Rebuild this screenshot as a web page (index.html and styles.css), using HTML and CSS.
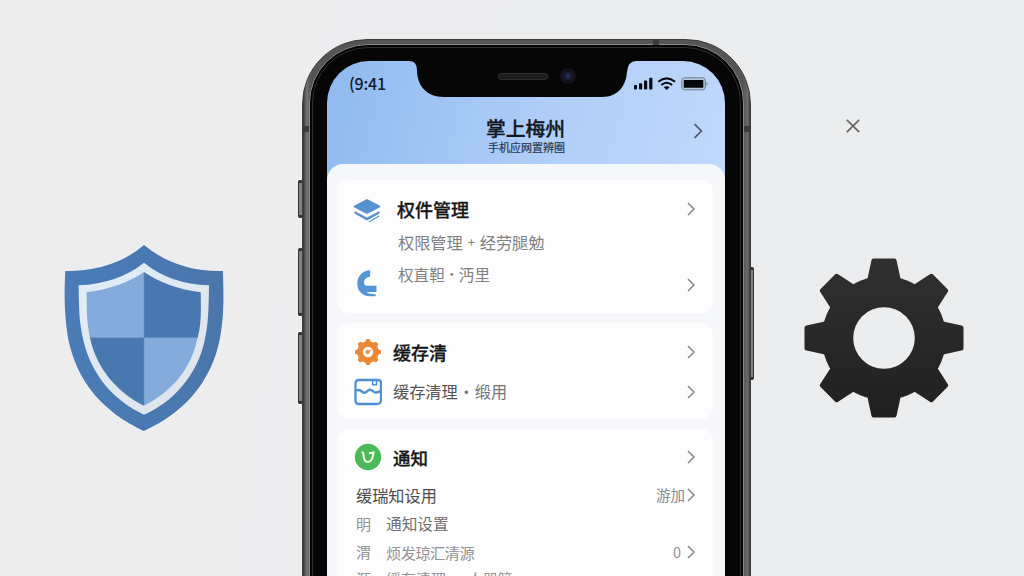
FILE: index.html
```html
<!DOCTYPE html>
<html lang="zh-CN">
<head>
<meta charset="utf-8">
<title>掌上梅州</title>
<link rel="stylesheet" href="styles.css">
</head>
<body>
<svg class="defs" width="0" height="0"><defs>
  <symbol id="chevron" viewBox="0 0 8 14"><path d="M1 1 L7 7 L1 13" fill="none" stroke="currentColor" stroke-width="1.5"/></symbol>
  <path id="tooth" d="M-17 -57 L-12.6 -77.5 Q-12.3 -79.5 -10.5 -79.5 H10.5 Q12.3 -79.5 12.6 -77.5 L17 -57 Z"/>
</defs></svg>
<main class="scene">
  <section class="side side-left">
    <svg class="shield" viewBox="42 26 480 564">
      <defs>
        <linearGradient id="rim" x1="0" x2="1" y1="0" y2="1"><stop offset="0" stop-color="#e2edf9"/><stop offset="1" stop-color="#dde3ea"/></linearGradient>
        <linearGradient id="base" x1="0" x2="1"><stop offset="0" stop-color="#4a7cb8"/><stop offset="1" stop-color="#4a76ab"/></linearGradient>
        <clipPath id="inner"><path d="M282 110 Q352 158 452 171 C454 245 452 280 440 318 C420 410 355 475 282 511 C205 475 140 400 121 312 C110 265 110 225 109 171 Q212 158 282 110 Z"/></clipPath>
      </defs>
      <path fill="url(#base)" d="M282 29 Q380 110 519 107 C521 200 522 240 510 308 C485 440 400 535 281 587 C160 530 80 440 54 308 C43 240 42 180 46 107 Q190 108 282 29 Z"/>
      <path fill="url(#rim)" d="M282 82 Q360 146 477 150 C476 230 475 270 463 320 C440 420 370 500 282 538 C190 495 125 420 100 315 C87 260 87 220 86 150 Q205 144 282 82 Z"/>
      <g clip-path="url(#inner)">
        <path fill="#84abdb" d="M100 100H282V307H100Z M282 307H460V520H282Z"/>
        <path fill="#4977b0" d="M282 100H460V307H282Z M100 307H282V520H100Z"/>
        <path d="M282 110V511M109 307H452" stroke="#648fc6" stroke-width="2"/>
      </g>
    </svg>
  </section>

  <section class="phone">
    <i class="key key-mute"></i><i class="key key-up"></i><i class="key key-down"></i><i class="key key-power"></i>
    <i class="seam seam-top"></i><i class="seam seam-left"></i><i class="seam seam-right"></i>
    <div class="rail"><div class="groove"><div class="bezel"><div class="screen">
      <svg class="notch" viewBox="0 0 398 40">
        <path d="M82 -1 V0 Q90 0 90 9 C90 24 99 36 117 36 H275 C291 36 299 25 300 11 Q301 0 309 0 V-1 Z" fill="#060607"/>
        <rect x="171" y="12.5" width="50" height="6" rx="3" fill="#1c1c1e" stroke="#363639" stroke-width=".8"/>
        <circle cx="241" cy="15" r="8" fill="#12131a"/><circle cx="241" cy="15" r="4" fill="#191e36"/><circle cx="241" cy="15" r="1.3" fill="#303c6c"/>
      </svg>
      <header class="top">
        <div class="status">
          <span class="time">(9:41</span>
          <svg class="signals" viewBox="0 0 76 14">
            <g fill="#080b12"><rect x="1" y="8" width="3" height="4.5" rx=".8"/><rect x="6" y="6.3" width="3.2" height="6.2" rx=".8"/><rect x="11" y="3.6" width="3.2" height="8.9" rx=".8"/><rect x="16.2" y=".7" width="3.2" height="11.8" rx=".8"/><path d="M30.8 10.3 Q33.7 8.3 36.6 10.3 L33.7 13 Z"/></g>
            <path d="M25.3 4.8 Q33.7 -2 42.1 4.8 M28.3 8 Q33.7 3.5 39.1 8" fill="none" stroke="#080b12" stroke-width="2"/>
            <rect x="48.8" y=".8" width="23.5" height="12" rx="2.7" fill="#b5c7df" stroke="#707b8c"/><rect x="50.8" y="3" width="19.5" height="7.8" rx=".6" fill="#05070a"/><path d="M73.6 5 Q75.4 6.8 73.6 8.6Z" fill="#404853"/>
          </svg>
        </div>
        <div class="heading">
          <div class="titles"><h1>掌上梅州</h1><p>手机应网置辨圈</p></div>
          <svg class="chev chev-large"><use href="#chevron"/></svg>
        </div>
      </header>
      <div class="sheet">
        <article class="card card-rights">
          <svg class="icon stack" viewBox="0 0 28 26">
            <path fill="#5792cf" d="M14 1 L27 7.7 Q28 8.5 27 9.3 L15 15.5 Q14 16 13 15.5 L1 9.3 Q0 8.5 1 7.7Z"/>
            <path fill="#5792cf" d="M1.5 13 L13 19.1 Q14 19.5 15 19.1 L26.5 13.1 V15.5 L15 22 Q14 22.5 13 22 L1.5 15.5Z"/>
            <path d="M16 24 L26 18" stroke="#5792cf" stroke-width="1.2"/>
          </svg>
          <div class="copy"><h2>权件管理</h2><p class="line-one"><span>权限管理</span><b>+</b><span>经劳腿勉</span></p><p class="line-two"><span>权直靼</span><b>·</b><span>沔里</span></p></div>
          <svg class="chev"><use href="#chevron"/></svg>
          <svg class="icon magnet" viewBox="0 0 20 27">
            <path d="M13.2 .3 V6.8 C9 7.2 7 10 7 12.4 Q7 15 9.5 15.8 H19.5 V21.9 H9.5 Q12 24 18.6 24.2 V26.3 H13 C5 26.3 .3 20.5 .3 13.5 C.3 6 6 .3 13.2 .3Z" fill="#5796d4"/>
          </svg>
          <svg class="chev chev-second"><use href="#chevron"/></svg>
        </article>

        <article class="card card-cache">
          <div class="row row-clean">
            <svg class="icon" viewBox="-14 -14 28 28">
              <g fill="#ea8836"><circle r="10.8"/><g id="cog-pair"><rect x="-2.3" y="-13" width="4.6" height="26" rx="1.5"/><rect x="-13" y="-2.3" width="26" height="4.6" rx="1.5"/></g><use href="#cog-pair" transform="rotate(45)"/></g>
              <circle r="5.2" fill="#fffaf5"/><circle r="2" cx="-.3" fill="#e88b42"/><path d="M0 0 L3-2" stroke="#e88b42"/>
            </svg>
            <h2>缓存清</h2><svg class="chev"><use href="#chevron"/></svg>
          </div>
          <div class="row row-usage">
            <svg class="icon" viewBox="0 0 28 28"><g fill="none" stroke="#4e91d2" stroke-width="2.3"><path d="M5 2 H24 Q27 2 27 5 V22 Q27 26 23 26 H5 Q1.5 26 1.5 23 V5.5 Q1.5 2 5 2Z"/><path d="M2 12.5 Q6 11 8.5 14 Q11 16 14 12.5 Q17 10.5 20 14 Q23 15.5 27 12.5"/><path d="M18.7 2 V6.7 H22.5 V3" stroke-width="1.5"/></g></svg>
            <p><span class="ink">缓存清理</span><b>·</b><span>缎用</span></p><svg class="chev"><use href="#chevron"/></svg>
          </div>
        </article>

        <article class="card card-notice">
          <div class="row row-notice">
            <svg class="icon" viewBox="0 0 28 28"><circle cx="14" cy="14" r="13.2" fill="#4cba59"/><path d="M7.5 9.3 Q9.6 9 9.5 12 Q9.8 19 14 19 Q18.7 18.5 19.5 9.5 M15 10.3 L20.5 9.3" fill="none" stroke="#f2fff2" stroke-width="2"/></svg>
            <h2>通知</h2><svg class="chev"><use href="#chevron"/></svg>
          </div>
          <div class="item item-dark"><span class="wide">缓瑞知设用</span><em>游加</em><svg class="chev"><use href="#chevron"/></svg></div>
          <div class="item item-mid"><i>明</i><span>通知设置</span></div>
          <div class="item"><i>渭</i><span class="tight">烦发琼汇清源</span><em class="count">0</em><svg class="chev"><use href="#chevron"/></svg></div>
          <div class="item"><i>源</i><span class="last">缓存清理 · 人器管</span></div>
        </article>
      </div>
    </div></div></div></div>
  </section>

  <section class="side side-right">
    <svg class="close" viewBox="0 0 14 14"><path d="M.8 .8 L13.2 13.2 M13.2 .8 L.8 13.2" stroke="#686868" stroke-width="1.7"/></svg>
    <svg class="gear" viewBox="-80 -80 160 160">
      <defs><linearGradient id="coal" x1="0" x2="0" y1="0" y2="1"><stop offset="0" stop-color="#303030"/><stop offset="1" stop-color="#202020"/></linearGradient>
      <mask id="gear-shape"><g fill="#fff"><circle r="62"/><use href="#tooth"/><use href="#tooth" transform="rotate(45)"/><use href="#tooth" transform="rotate(90)"/><use href="#tooth" transform="rotate(135)"/><use href="#tooth" transform="rotate(180)"/><use href="#tooth" transform="rotate(225)"/><use href="#tooth" transform="rotate(270)"/><use href="#tooth" transform="rotate(315)"/></g><circle r="30.8" fill="#000"/></mask></defs>
      <rect x="-80" y="-80" width="160" height="160" fill="url(#coal)" mask="url(#gear-shape)"/>
    </svg>
  </section>
</main>
</body>
</html>
```
FILE: styles.css
```css
* { box-sizing: border-box; }
body { margin: 0; overflow: hidden; font-family: "Noto Sans CJK SC", sans-serif; }
h1, h2, p { margin: 0; }
svg { display: block; flex: none; }
i, em { font-style: normal; }
.defs { position: absolute; }
.scene { width: 1024px; height: 576px; overflow: hidden; display: grid; grid-template-columns: 302px 449px 273px; background: linear-gradient(100deg, #ededee, #ecedef 60%, #ebecee); }
.side-left { padding: 244px 0 0 64px; }
.shield { width: 160px; height: 188px; }
.side-right { display: flex; flex-direction: column; padding: 119px 0 0 53px; }
.close { width: 14px; height: 14px; margin-left: 42px; }
.gear { width: 160px; height: 160px; margin-top: 125px; margin-left: -.5px; }

.phone { position: relative; height: 660px; margin-top: 39px; }
.rail { position: relative; height: 100%; padding: 4px 6px; border-radius: 65px; background: linear-gradient(90deg, #343434, #777 4px, #555 7px, #555 440px, #6c6c6c 445px, #343434); border: 1px solid #3c3c3c; }
.groove { height: 100%; padding: 2px; border-radius: 59px; background: #050505; border: 1px solid #8a8a8a; }
.bezel { height: 100%; padding: 13px 15px; border-radius: 56px; background: #060607; border: 1px solid #2f2f30; }
.screen { position: relative; height: 600px; width: 398px; margin-left: -1px; border-radius: 42px 42px 0 0; overflow: hidden; background: linear-gradient(105deg, #8fbaf0 0, #b1cff8 58%, #c0d8fa 100%) 0 0 / 100% 130px no-repeat, #f5f7fb; }
.notch { position: absolute; left: 0; top: 0; width: 398px; height: 40px; }
.key { position: absolute; width: 5px; background: #828282; border: 1px solid #333; border-top-width: 3px; border-bottom-width: 3px; border-radius: 2px; }
.key-mute { left: -4px; top: 141px; height: 38px; }
.key-up { left: -4px; top: 209px; height: 68px; }
.key-down { left: -4px; top: 293px; height: 72px; }
.key-power { right: -3px; top: 228px; height: 113px; }
.seam { position: absolute; z-index: 1; background: #3b3b3b; }
.seam-top { left: 351px; top: 0; width: 6px; height: 6px; }
.seam-left { left: 0; top: 87px; width: 7px; height: 6px; }
.seam-right { right: 0; top: 87px; width: 7px; height: 6px; }

.top { position: relative; height: 103px; }
.status { display: flex; justify-content: space-between; height: 47px; padding: 13px 16px 0 22px; }
.time { font: 500 16px/20px "Noto Sans CJK SC", sans-serif; letter-spacing: -.2px; color: #111a2a; margin-top: -1px; }
.signals { width: 76px; height: 14px; margin-top: 3px; }
.heading { display: grid; grid-template-columns: 1fr auto; padding: 7px 22px 0 159px; }
.titles h1 { font-size: 19.8px; line-height: 28px; font-weight: 500; color: #111722; white-space: nowrap; margin-top: -1px; -webkit-text-stroke: .3px currentColor; }
.titles p { font-size: 11px; line-height: 12px; margin: -1px 0 0 2px; color: #29384f; -webkit-text-stroke: .2px currentColor; }
.chev { width: 8px; height: 14px; margin-left: auto; color: #858585; }
.chev-large { width: 10px; height: 16px; margin-top: 8px; color: #505b6c; }
.sheet { display: flex; flex-direction: column; gap: 10px; height: 600px; padding: 16px 12px 0 10px; border-radius: 16px 16px 0 0; background: #f5f7fa; }
.card { flex: none; border-radius: 12px; background: #fdfdfe; padding: 0 18px 0 16px; }
.icon { width: 28px; height: 28px; }
h2 { font-size: 18px; line-height: 26px; font-weight: 500; color: #171717; -webkit-text-stroke: .3px currentColor; }
.card-rights { height: 133px; display: grid; grid-template-columns: 28px 1fr 8px; grid-template-rows: 87px 46px; column-gap: 16px; }
.stack { height: 26px; margin-top: 18px; }
.card-rights .copy { grid-row: 1 / 3; grid-column: 2; padding-top: 16px; }
.card-rights .chev { grid-column: 3; grid-row: 1; margin-top: 22px; }
.magnet { width: 20px; height: 27px; grid-row: 2; grid-column: 1; margin: 3px 0 0 4px; }
.card-rights .chev-second { grid-row: 2; margin-top: 11px; }
.copy p { display: flex; font-size: 16px; line-height: 24px; margin-left: 1px; color: #818181; white-space: nowrap; }
.copy .line-one { margin-top: 8px; font-size: 16.2px; }
.copy b { width: 17px; font-weight: 400; font-size: 13px; text-align: center; }
.copy .line-two { margin-top: 8px; font-size: 15.6px; }
.copy .line-two b { width: 14px; }
.card-cache { height: 96px; padding-top: 9px; }
.row { display: flex; align-items: center; gap: 12px; height: 40px; }
.row-clean .icon, .row-usage .icon { margin: 0 -1px 0 1px; }
.row h2 { margin-top: -1px; }
.row-notice .icon { margin: 0 -1px 0 1px; }
.row p { display: flex; font-size: 16.2px; line-height: 24px; color: #767676; margin-top: -2px; }
.row .ink { color: #555; }
.row b { width: 17px; font-weight: 400; text-align: center; }
.card-notice { height: 180px; padding-top: 8px; }
.row-notice h2 { font-size: 17.5px; margin-top: 1px; }
.row-notice { height: 40px; }
.item { display: flex; align-items: center; height: 28.5px; padding-left: 3px; font-size: 15px; line-height: 24px; color: #929292; white-space: nowrap; }
.item i { width: 30px; }
.item span { font-size: 15.7px; }
.item .wide { font-size: 16.2px; }
.item .tight { font-size: 15.2px; letter-spacing: -.5px; }
.item .last { font-size: 15px; }
.item em { margin-left: auto; font-size: 14.5px; }
.item em + .chev { margin-left: 2px; }
.item .count + .chev { margin-left: 6px; }
.item-dark { color: #4c4c4c; height: 36px; }
.item-dark em { color: #888; }
.item-mid { height: 21px; }
.item-mid span { color: #707070; }
.item-mid + .item { height: 36px; }
.item-mid + .item + .item { height: 18px; }
```
